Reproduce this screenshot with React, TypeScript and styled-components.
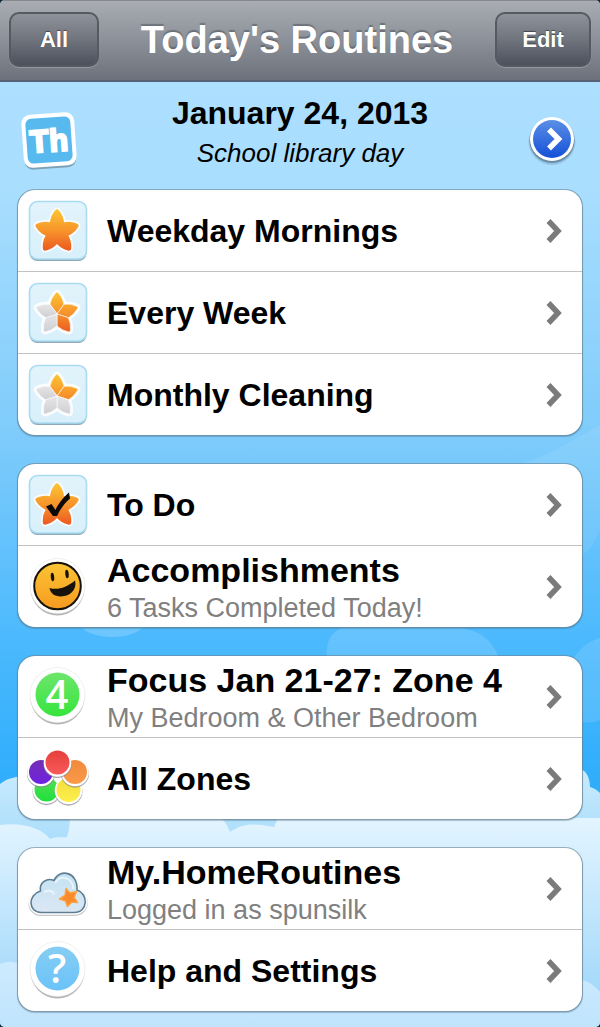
import React from "react";
import styled, { createGlobalStyle } from "styled-components";

const GlobalStyle = createGlobalStyle`
  * { box-sizing: border-box; }
  html { background: #1c2530; }
  body {
    margin: 0;
    font-family: "Liberation Sans", Arial, Helvetica, sans-serif;
    color: #000;
  }
`;

const Screen = styled.div`
  position: relative;
  min-height: 100vh;
  display: flex;
  flex-direction: column;
  border-radius: 5px;
  overflow: hidden;
  background: #7fcdfc;
`;

const NavBar = styled.header`
  display: flex;
  align-items: center;
  justify-content: space-between;
  height: 82px;
  padding: 0 9px 2px;
  background: linear-gradient(#a9acb3 0%, #8c9098 50%, #6c717b 100%);
  border-top: 1px solid #85888e;
  border-bottom: 2px solid #566273;
`;

const NavTitle = styled.h1`
  margin: 0;
  font-size: 38px;
  line-height: 44px;
  font-weight: bold;
  color: #fff;
  text-shadow: 0 -2px 1px rgba(50, 55, 65, 0.4);
`;

const NavButton = styled.button<{ $width: number }>`
  width: ${(p) => p.$width}px;
  height: 55px;
  padding: 0;
  border: 2px solid #555961;
  border-radius: 10px;
  background: linear-gradient(#8f929a 0%, #70747d 50%, #4c515d 100%);
  box-shadow: 0 1px 1px rgba(255, 255, 255, 0.25);
  font-family: inherit;
  font-size: 22px;
  font-weight: bold;
  color: #fff;
  text-shadow: 0 -1px 1px rgba(30, 35, 45, 0.6);
`;

const Content = styled.main`
  position: relative;
  flex: 1;
  padding-bottom: 15px;
`;

const Backdrop = styled.svg`
  position: absolute;
  inset: 0;
  width: 100%;
  height: 100%;
`;

const DayBar = styled.section`
  position: relative;
  display: grid;
  grid-template-columns: 60px 1fr 60px;
  align-items: end;
  padding: 11px 19px 16px;
`;

const DayText = styled.div`
  text-align: center;
`;

const DayDate = styled.h2`
  margin: 0;
  font-size: 32px;
  line-height: 40px;
  font-weight: bold;
`;

const DayNote = styled.p`
  margin: 0;
  font-size: 26px;
  line-height: 40px;
  font-style: italic;
`;

const NextDay = styled.button`
  display: block;
  width: 60px;
  height: 60px;
  padding: 0;
  border: 0;
  background: none;
`;

const Groups = styled.nav`
  position: relative;
  display: flex;
  flex-direction: column;
  gap: 27px;
  padding: 0 17px;
`;

const Group = styled.ul`
  margin: 0;
  padding: 0;
  list-style: none;
  background: #fff;
  background-clip: padding-box;
  border: 1px solid rgba(110, 135, 150, 0.6);
  border-radius: 18px;
  box-shadow: 0 1px 1px rgba(70, 100, 120, 0.35);
`;

const Item = styled.li`
  & + & {
    border-top: 1px solid #c2c2c2;
  }
`;

const ItemLink = styled.a`
  display: flex;
  align-items: center;
  height: 81px;
  padding: 0 20px 0 9px;
  color: inherit;
  text-decoration: none;
`;

const ItemText = styled.span<{ $double: boolean }>`
  flex: 1;
  min-width: 0;
  display: flex;
  flex-direction: column;
  margin-left: 20px;
  padding-top: ${(p) => (p.$double ? 5 : 1)}px;
`;

const ItemTitle = styled.span<{ $large: boolean }>`
  font-size: ${(p) => (p.$large ? 34 : 32)}px;
  line-height: 38px;
  font-weight: bold;
`;

const ItemDetail = styled.span`
  font-size: 27px;
  line-height: 38px;
  color: #808080;
`;

const Icon = styled.svg`
  display: block;
  flex: none;
  width: 60px;
  height: 60px;
  overflow: visible;
`;

const Arrow = styled.svg`
  flex: none;
  width: 16px;
  height: 26px;
`;

const DayGlyph = styled.text`
  font-family: "DejaVu Sans Condensed", "DejaVu Sans", sans-serif;
  font-size: 31px;
  font-weight: bold;
  fill: #fff;
  text-anchor: middle;
`;

const BadgeGlyph = styled.text`
  font-family: "Open Sans", Roboto, "Liberation Sans", sans-serif;
  font-size: 40px;
  font-weight: 600;
  fill: #fff;
  text-anchor: middle;
`;

const polar = (radius: number, degrees: number) => {
  const a = ((degrees - 90) * Math.PI) / 180;
  return `${30 + radius * Math.cos(a)} ${31 + radius * Math.sin(a)}`;
};

const petal = (i: number, notch: number) => {
  const a = i * 72;
  return [
    `M30 31L${polar(notch, a - 36)}`,
    `Q${polar(17, a - 20)} ${polar(21, a - 4)}`,
    `Q${polar(23, a)} ${polar(21, a + 4)}`,
    `Q${polar(17, a + 20)} ${polar(notch, a + 36)}Z`,
  ].join("");
};

const PETALS = [0, 1, 2, 3, 4];

function StarTile({ filled, split, check }: { filled: number; split?: boolean; check?: boolean }) {
  const notch = split ? 12 : 11;
  return (
    <Icon viewBox="0 0 60 60" aria-hidden="true">
      <rect x="2.5" y="1.5" width="57" height="58.5" rx="8" fill="#8fa9b8" />
      <rect x="2.5" y="0.5" width="57" height="57.5" rx="8" fill="url(#tile)" stroke="#a9dbf1" strokeWidth="1.6" />
      {PETALS.map((i) => (
        <path key={i} d={petal(i, notch)} fill="#fff" stroke="#fff" strokeWidth="5" strokeLinejoin="round" opacity="0.85" />
      ))}
      {PETALS.map((i) => (
        <path
          key={i}
          d={petal(i, notch)}
          fill={i < filled ? "url(#amber)" : "url(#silver)"}
          stroke={split ? "#fff" : "url(#amber)"}
          strokeWidth={split ? 0.6 : 1.4}
          strokeLinejoin="round"
        />
      ))}
      {check && (
        <path
          d="M19 31.500l5.500-2.500 4 6c2.500-6 7.500-12.500 13.500-17.500l1 6c-6 5-9.500 10.500-13 17.500l-4 0z"
          fill="#0c0a08"
        />
      )}
    </Icon>
  );
}

function Disc({ cy }: { cy: number }) {
  return (
    <>
      <circle cx="30.5" cy={cy + 1.5} r="27" fill="#8d8d8d" opacity="0.65" />
      <circle cx="30.5" cy={cy - 1} r="27.5" fill="#fff" stroke="#e6e6ea" strokeWidth="0.6" />
    </>
  );
}

function SmileIcon() {
  return (
    <Icon viewBox="0 0 60 60" aria-hidden="true">
      <Disc cy={30} />
      <circle cx="30.5" cy="29" r="23.3" fill="url(#smile)" stroke="#17120a" strokeWidth="2" />
      <ellipse cx="25.5" cy="20" rx="1.7" ry="4.3" fill="#17120a" transform="rotate(-6 25.5 20)" />
      <ellipse cx="40" cy="17" rx="1.7" ry="4.3" fill="#17120a" transform="rotate(-6 40 17)" />
      <path d="M22.500 31c8 2.500 17-.5 25.500-7.500 2 7-2.500 14-10.500 15.500-8 1.500-14-1.500-15-8z" fill="#17120a" />
    </Icon>
  );
}

function BadgeIcon({ glyph, fill }: { glyph: string; fill: string }) {
  return (
    <Icon viewBox="0 0 60 60" aria-hidden="true">
      <Disc cy={29} />
      <circle cx="30.5" cy="27.5" r="22" fill={fill} />
      <BadgeGlyph x="30" y="42">
        {glyph}
      </BadgeGlyph>
    </Icon>
  );
}

const DOTS = [
  { x: 19.5, y: 41, fill: "url(#green)" },
  { x: 41.5, y: 41.5, fill: "url(#yellow)" },
  { x: 14, y: 23.5, fill: "url(#purple)" },
  { x: 48, y: 23.5, fill: "url(#orange)" },
  { x: 30.5, y: 14, fill: "url(#red)" },
];

function ZonesIcon() {
  return (
    <Icon viewBox="0 0 60 60" aria-hidden="true">
      {DOTS.map((d) => (
        <g key={d.fill}>
          <circle cx={d.x} cy={d.y + 1.2} r="14" fill="#8b8790" opacity="0.7" />
          <circle cx={d.x} cy={d.y} r="13.8" fill="#fff" />
          <circle cx={d.x} cy={d.y - 0.5} r="12" fill={d.fill} />
        </g>
      ))}
    </Icon>
  );
}

const CLOUD =
  "M14 53.500C1 53 0.500 36 13.500 32C12 23.500 20 18.500 27 21.500C32 9.500 51 12 50 31C61.500 34.500 61.500 53.500 47 53.500Z";

function CloudIcon() {
  return (
    <Icon viewBox="0 0 60 60" aria-hidden="true">
      <path d={CLOUD} fill="#c4c8cc" stroke="#c4c8cc" strokeWidth="5" transform="translate(0 1)" />
      <path d={CLOUD} fill="#fff" stroke="#fff" strokeWidth="4.5" />
      <path d={CLOUD} fill="url(#cloud)" stroke="#5f7d92" strokeWidth="1.6" />
      <path d="M28 24c5-8 17-7 18.500 6M17 33.500c4-3.500 9-2 10 2" fill="none" stroke="#fff" strokeWidth="2" opacity="0.6" />
      <path
        d="M39 29.500l4 4.500 6.500-1.500-2.500 6 3.500 5-6-.5-4 4.500-2-5.500-6-2 5.500-3.500z"
        fill="#f98a2b"
        stroke="#ffa13c"
        strokeWidth="1.5"
        strokeLinejoin="round"
      />
    </Icon>
  );
}

function Stop({ id, from, to }: { id: string; from: string; to: string }) {
  return (
    <linearGradient id={id} x1="0" y1="0" x2="0" y2="1">
      <stop offset="0" stopColor={from} />
      <stop offset="1" stopColor={to} />
    </linearGradient>
  );
}

function Sky() {
  return (
    <Backdrop viewBox="0 82 600 945" preserveAspectRatio="none" aria-hidden="true">
      <defs>
        <linearGradient id="sky" gradientUnits="userSpaceOnUse" x1="0" y1="82" x2="0" y2="800">
          <stop offset="0" stopColor="#addfff" />
          <stop offset="0.15" stopColor="#a9defe" />
          <stop offset="0.5" stopColor="#7dcbfb" />
          <stop offset="0.78" stopColor="#4bb9fd" />
          <stop offset="1" stopColor="#2cacfb" />
        </linearGradient>
        <linearGradient id="amber" gradientUnits="userSpaceOnUse" x1="0" y1="10" x2="0" y2="50">
          <stop offset="0" stopColor="#fcc234" />
          <stop offset="0.5" stopColor="#f7932a" />
          <stop offset="1" stopColor="#ec5820" />
        </linearGradient>
        <Stop id="haze" from="#c9ebfe" to="#9fd8fa" />
        <Stop id="bank" from="#e4f5ff" to="#97d3fa" />
        <Stop id="low" from="#cdebfe" to="#bfe4fc" />
        <Stop id="tile" from="#e2f3fb" to="#d8f0fb" />
        <Stop id="silver" from="#e6e6e8" to="#cfcfd3" />
        <Stop id="smile" from="#fcc534" to="#f69a20" />
        <Stop id="lime" from="#6fe56c" to="#35e53c" />
        <Stop id="aqua" from="#86cdf3" to="#6ac3f8" />
        <Stop id="green" from="#55dd55" to="#1fe03a" />
        <Stop id="yellow" from="#f3dc3c" to="#fdf04c" />
        <Stop id="purple" from="#7430b4" to="#6d22e0" />
        <Stop id="orange" from="#f08a3c" to="#fb9a48" />
        <Stop id="red" from="#e4403c" to="#fa5a5a" />
        <Stop id="cloud" from="#c3e2f3" to="#dbe7f3" />
        <Stop id="blue" from="#5b8fe6" to="#1450d8" />
      </defs>
      <rect x="0" y="82" width="600" height="945" fill="url(#sky)" />
      <path d="M600 425C585 432 560 452 515 466V560H570C588 555 594 545 600 530Z" fill="#fff" opacity="0.08" />
      <path d="M327 660C325 640 332 632 342 628H462C482 632 492 640 500 660Z" fill="#fff" opacity="0.14" />
      <path d="M82 628C95 640 130 640 142 628Z" fill="#fff" opacity="0.18" />
      <path d="M600 638C585 642 572 655 570 670V715C580 724 590 724 600 720Z" fill="#fff" opacity="0.12" />
      <path d="M0 784C8 778 14 777 24 776H580V769C586 770 590 778 590 787C594 788 597 790 600 793V870H0Z" fill="url(#haze)" />
      <path
        d="M0 825C22 822 42 828 50 839C58 836 64 838 67 837Q70 828 70 815H216Q226 820 230 832C244 822 258 824 274 827L278 818H600V1027H0Z"
        fill="url(#bank)"
      />
      <path d="M0 964C10 960 20 962 28 970V1005H570V980C582 978 592 982 600 992V1027H0Z" fill="url(#low)" />
    </Backdrop>
  );
}

interface Entry {
  title: string;
  detail?: string;
  icon: React.ReactNode;
}

const GROUPS: Entry[][] = [
  [
    { title: "Weekday Mornings", icon: <StarTile filled={5} /> },
    { title: "Every Week", icon: <StarTile filled={3} split /> },
    { title: "Monthly Cleaning", icon: <StarTile filled={2} split /> },
  ],
  [
    { title: "To Do", icon: <StarTile filled={5} check /> },
    { title: "Accomplishments", detail: "6 Tasks Completed Today!", icon: <SmileIcon /> },
  ],
  [
    {
      title: "Focus Jan 21-27: Zone 4",
      detail: "My Bedroom & Other Bedroom",
      icon: <BadgeIcon glyph="4" fill="url(#lime)" />,
    },
    { title: "All Zones", icon: <ZonesIcon /> },
  ],
  [
    { title: "My.HomeRoutines", detail: "Logged in as spunsilk", icon: <CloudIcon /> },
    { title: "Help and Settings", icon: <BadgeIcon glyph="?" fill="url(#aqua)" /> },
  ],
];

export default function App() {
  return (
    <>
      <GlobalStyle />
      <Screen>
        <NavBar>
          <NavButton $width={90} type="button">All</NavButton>
          <NavTitle>Today's Routines</NavTitle>
          <NavButton $width={96} type="button">Edit</NavButton>
        </NavBar>
        <Content>
          <Sky />
          <DayBar>
            <Icon viewBox="0 0 60 60" role="img" aria-label="Thursday">
              <g transform="rotate(-4 30 27)">
                <rect x="4" y="2.5" width="52" height="53" rx="9" fill="#6f8a9b" opacity="0.75" />
                <rect x="3.5" y="0.5" width="53" height="53" rx="9" fill="#fff" />
                <rect x="7.5" y="4.5" width="45" height="45" rx="6" fill="#58b9ee" />
                <DayGlyph x="30" y="39" stroke="#fff" strokeWidth="1.5">
                  Th
                </DayGlyph>
              </g>
            </Icon>
            <DayText>
              <DayDate>January 24, 2013</DayDate>
              <DayNote>School library day</DayNote>
            </DayText>
            <NextDay type="button" aria-label="Next day">
              <Icon viewBox="0 0 60 60" aria-hidden="true">
                <circle cx="31" cy="28.5" r="23.5" fill="#4f7490" opacity="0.25" />
                <circle cx="31" cy="27.5" r="22.5" fill="#4c6678" opacity="0.6" />
                <circle cx="31" cy="26" r="22" fill="#fff" />
                <circle cx="31" cy="26" r="19" fill="url(#blue)" />
                <path d="M28 16.5L37.5 26L28 35.5" fill="none" stroke="#fff" strokeWidth="5.5" />
              </Icon>
            </NextDay>
          </DayBar>
          <Groups aria-label="Routines">
            {GROUPS.map((entries) => (
              <Group key={entries[0].title}>
                {entries.map((e) => (
                  <Item key={e.title}>
                    <ItemLink href="#">
                      {e.icon}
                      <ItemText $double={Boolean(e.detail)}>
                        <ItemTitle $large={Boolean(e.detail)}>{e.title}</ItemTitle>
                        {e.detail && <ItemDetail>{e.detail}</ItemDetail>}
                      </ItemText>
                      <Arrow viewBox="0 0 16 26" aria-hidden="true">
                        <path d="M2.5 3L12 13L2.5 23" fill="none" stroke="#7b7b7b" strokeWidth="5.5" />
                      </Arrow>
                    </ItemLink>
                  </Item>
                ))}
              </Group>
            ))}
          </Groups>
        </Content>
      </Screen>
    </>
  );
}
